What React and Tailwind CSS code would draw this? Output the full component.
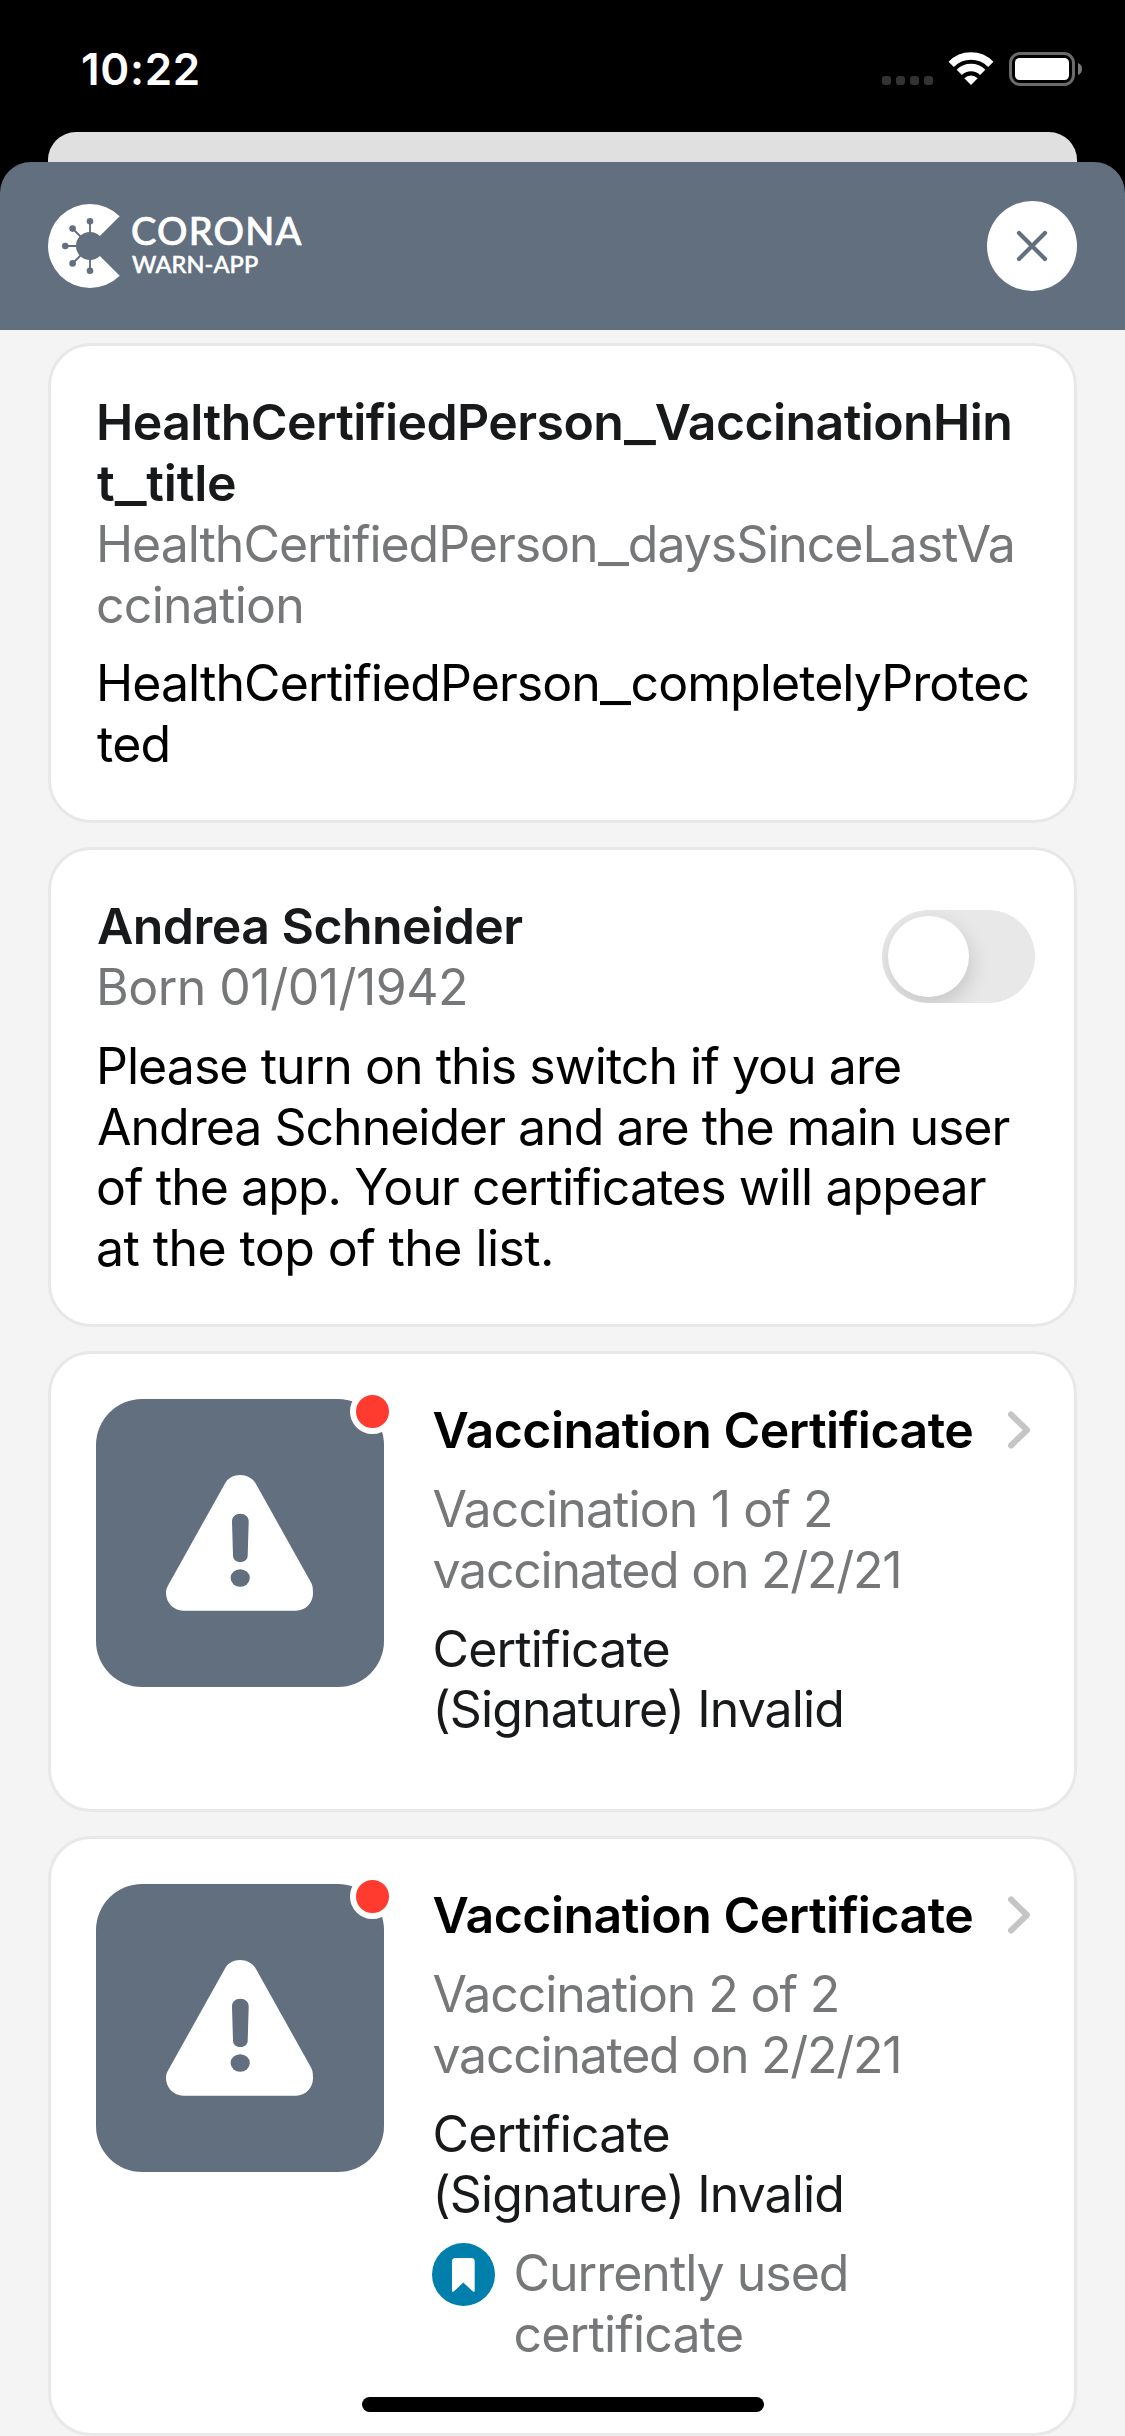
import React from "react";

const line = "block whitespace-nowrap";

/* Underscore with the wide bar used in unresolved string keys */
function Underscore() {
  return <span className="mx-[4.3px] inline-block scale-x-[1.36]">_</span>;
}

function StatusBar() {
  return (
    <div className="flex h-[132px] shrink-0 items-start justify-between pt-[43px] pr-[43px] pl-[81px] text-white">
      <span className="text-[44px] leading-[52px] font-semibold tracking-[0.7px]">10:22</span>
      <div className="flex items-end pt-[9px]">
        <div className="flex gap-[5px] pb-[1px]">
          <i className="size-[9px] rounded-[3px] bg-[#333333]" />
          <i className="size-[9px] rounded-[3px] bg-[#333333]" />
          <i className="size-[9px] rounded-[3px] bg-[#333333]" />
          <i className="size-[9px] rounded-[3px] bg-[#333333]" />
        </div>
        <svg className="ml-[14px]" width="48" height="34" viewBox="947 52 48 34" fill="none" stroke="white" strokeWidth="7.4">
          <path d="M951.2 64.4A27.7 27.7 0 0 1 990.8 64.4" />
          <path d="M959.3 72.3A16.6 16.6 0 0 1 982.7 72.3" />
          <path d="M971 85L964.3 78.3A9.6 9.6 0 0 1 977.7 78.3Z" fill="white" stroke="none" />
        </svg>
        <svg className="ml-[14px]" width="73" height="34" viewBox="0 0 73 34">
          <rect x="1.5" y="1.5" width="63" height="31" rx="9.5" fill="none" stroke="#6b6b6b" strokeWidth="3" />
          <rect x="6" y="6" width="54" height="22" rx="4.5" fill="white" />
          <path d="M69 11C71.6 12 73 14.3 73 17S71.6 22 69 23Z" fill="#7a7a7a" />
        </svg>
      </div>
    </div>
  );
}

function Logo() {
  return (
    <div className="flex items-center">
      <svg width="84" height="84" viewBox="0 0 84 84">
        <path d="M71.7 12.3A42 42 0 1 0 71.7 71.7L51.9 51.9A14 14 0 1 1 51.9 32.1Z" fill="white" />
        <g stroke="#626f7f" strokeWidth="1.9">
          <path d="M42 30V18M42 54V66M30 42H18M34 34L25 25M34 50L25 59" />
        </g>
        <g fill="#626f7f">
          <circle cx="42" cy="17.3" r="3.3" />
          <circle cx="42" cy="66.7" r="3.3" />
          <circle cx="17.3" cy="42" r="3.3" />
          <circle cx="24.6" cy="24.6" r="3.3" />
          <circle cx="24.6" cy="59.4" r="3.3" />
        </g>
      </svg>
      <div className="-mt-[3px] -ml-px flex flex-col gap-px font-[Lato,sans-serif] font-medium whitespace-nowrap text-white">
        <span className="text-[38px] leading-[38px] tracking-[1.2px] [-webkit-text-stroke:0.7px_white]">CORONA</span>
        <span className="pl-px text-[23.5px] leading-[28px] tracking-[0.1px] [-webkit-text-stroke:0.5px_white]">WARN-APP</span>
      </div>
    </div>
  );
}

function Header() {
  return (
    <header className="flex h-[168px] shrink-0 items-center justify-between rounded-t-[31px] bg-[#626f7f] px-12">
      <Logo />
      <button className="flex size-[90px] items-center justify-center rounded-full bg-white">
        <svg width="90" height="90" viewBox="0 0 90 90" stroke="#626f7f" strokeWidth="4.2" strokeLinecap="round">
          <path d="M32 32L58 58M58 32L32 58" />
        </svg>
      </button>
    </header>
  );
}

function Card({ className, children }) {
  return (
    <section className={`shrink-0 rounded-[43px] border-[3px] border-[#e8e8e8] bg-white px-[45px] pb-[44px] ${className}`}>
      {children}
    </section>
  );
}

function Switch() {
  return (
    <div className="mt-[14px] -mr-[6px] flex h-[93px] w-[153px] items-center overflow-hidden rounded-full bg-[#e8e8e8] px-[6px]">
      <div className="size-[81px] rounded-full bg-white shadow-[2px_8px_20px_rgba(0,0,0,0.15)]" />
    </div>
  );
}

function WarningTile() {
  return (
    <div className="relative size-[288px] shrink-0 rounded-[46px] bg-[#626f7f]">
      <svg width="288" height="288" viewBox="0 0 288 288">
        <path
          d="M129 84.5C132 79 137.5 76 144 76S156.500 79 159.700 84.500L215 183.500C216.600 186.500 217 189 217 194.500C217 203.500 209.500 211.700 200 211.700H87.300C77.500 211.700 70 203.500 70 194C70 191 70.800 188.500 72.300 186Z"
          fill="white"
        />
        <path
          d="M136 122.500C136 117.800 139.300 114.700 144.300 114.700S152.700 117.800 152.700 122.500L151.700 156.500C151.600 160.500 148.800 163 144.300 163S137.100 160.500 137 156.500Z"
          fill="#626f7f"
        />
        <ellipse cx="144.200" cy="179" rx="9.600" ry="8.700" fill="#626f7f" />
      </svg>
      <span className="absolute -top-[10px] left-[254px] size-[45px] rounded-full border-[6px] border-white bg-[#ff3b30]" />
    </div>
  );
}

function Certificate({ dose, children }) {
  return (
    <div className="flex">
      <WarningTile />
      <div className="ml-[48.5px] flex flex-1 flex-col gap-[18px] pt-px">
        <div className="flex justify-between">
          <h2 className="font-semibold whitespace-nowrap tracking-[-0.53px]">Vaccination Certificate</h2>
          <svg className="mt-[11px] -mr-[2px]" width="24" height="38" viewBox="0 0 24 38" fill="none" stroke="#c5c5c5" strokeWidth="6" strokeLinecap="round" strokeLinejoin="round">
            <path d="M4 3.500L20 19L4 34.500" />
          </svg>
        </div>
        <p className="text-[#757779]">
          {dose}
          <span className={`${line} tracking-[-1.25px]`}>vaccinated on 2/2/21</span>
        </p>
        <p className="text-[#17191a]">
          <span className={`${line} tracking-[-0.84px]`}>Certificate</span>
          <span className={`${line} tracking-[-0.9px]`}>(Signature) Invalid</span>
        </p>
        {children}
      </div>
    </div>
  );
}

function CurrentlyUsed() {
  return (
    <div className="-ml-[0.5px] flex text-[#757779]">
      <svg width="63" height="63" viewBox="0 0 63 63">
        <circle cx="31.500" cy="31.500" r="31.500" fill="#007fad" />
        <path d="M20 18.500A3.500 3.500 0 0 1 23.500 15H39.200A3.500 3.500 0 0 1 42.700 18.500V47.500Q42.700 50 40.700 48.300L31.300 39.500L22 48.300Q20 50 20 47.500Z" fill="white" />
      </svg>
      <p className="ml-[18.500px]">
        <span className={`${line} tracking-[-1px]`}>Currently used</span>
        <span className={`${line} tracking-[-0.8px]`}>certificate</span>
      </p>
    </div>
  );
}

export default function App() {
  return (
    <div className="relative flex h-[2436px] w-[1125px] flex-col overflow-hidden bg-black font-[Inter,sans-serif] text-[50px] leading-[60.85px]">
      <StatusBar />
      <div className="mx-12 h-[30px] shrink-0 rounded-t-[28px] bg-[#e0e0e0]" />
      <Header />
      <main className="flex flex-1 flex-col gap-6 bg-[#f4f4f4] px-12 pt-[13px]">
        <Card className="h-[480px] pt-[46px]">
          <h2 className="font-semibold text-[#17191a]">
            <span className={`${line} tracking-[-0.58px]`}>
              HealthCertifiedPerson<Underscore />VaccinationHin
            </span>
            <span className={`${line} pl-px tracking-[-0.2px]`}>
              t<Underscore />title
            </span>
          </h2>
          <p className="text-[#757779]">
            <span className={`${line} tracking-[-1.04px]`}>
              HealthCertifiedPerson<Underscore />daysSinceLastVa
            </span>
            <span className={`${line} tracking-[-0.75px]`}>ccination</span>
          </p>
          <p className="mt-[18px] text-black">
            <span className={`${line} tracking-[-0.92px]`}>
              HealthCertifiedPerson<Underscore />completelyProtec
            </span>
            <span className={`${line} pl-px tracking-[-0.71px]`}>ted</span>
          </p>
        </Card>

        <Card className="h-[480px] pt-[46px]">
          <div className="flex h-[121.7px] justify-between">
            <div>
              <h2 className={`${line} pl-px tracking-[-0.55px] font-semibold text-[#17191a]`}>Andrea Schneider</h2>
              <p className={`${line} tracking-[-0.52px] text-[#757779]`}>Born 01/01/1942</p>
            </div>
            <Switch />
          </div>
          <p className="mt-[18px] text-black">
            <span className={`${line} tracking-[-0.96px]`}>Please turn on this switch if you are</span>
            <span className={`${line} pl-px tracking-[-1px]`}>Andrea Schneider and are the main user</span>
            <span className={`${line} tracking-[-0.94px]`}>of the app. Your certificates will appear</span>
            <span className={`${line} tracking-[-0.58px]`}>at the top of the list.</span>
          </p>
        </Card>

        <Card className="h-[461px] pt-[45px]">
          <Certificate dose={<span className={`${line} tracking-[-0.9px]`}>Vaccination 1 of 2</span>} />
        </Card>

        <Card className="h-[600px] pt-[45px]">
          <Certificate dose={<span className={`${line} tracking-[-1.1px]`}>Vaccination 2 of 2</span>}>
            <CurrentlyUsed />
          </Certificate>
        </Card>
      </main>
      <div className="absolute bottom-6 left-[362px] h-[15px] w-[402px] rounded-full bg-black" />
    </div>
  );
}
